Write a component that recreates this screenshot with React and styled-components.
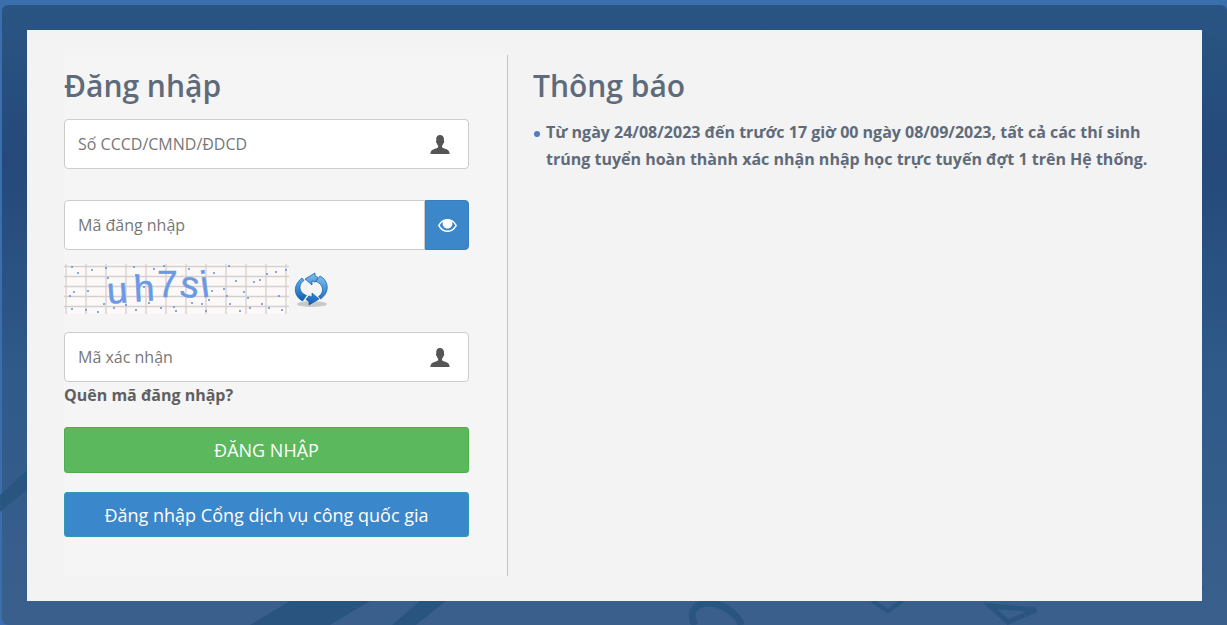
import React from "react"
import styled, { createGlobalStyle } from "styled-components"

const GlobalStyle = createGlobalStyle`
  html, body {
    margin: 0;
    padding: 0;
    background: #3a6fae;
  }
  * {
    box-sizing: border-box;
  }
`

const App = () => (
  <Page>
    <GlobalStyle />
    <Backdrop>
      <BackdropArt />
      <Card>
        <LoginColumn>
          <Title>Đăng nhập</Title>
          <FieldRow>
            <TextInput placeholder="Số CCCD/CMND/ĐDCD" />
            <FieldIcon>
              <UserIcon />
            </FieldIcon>
          </FieldRow>
          <PasswordRow>
            <PasswordInput placeholder="Mã đăng nhập" />
            <EyeButton type="button">
              <EyeIcon />
            </EyeButton>
          </PasswordRow>
          <CaptchaRow>
            <Captcha />
            <RefreshIcon />
          </CaptchaRow>
          <FieldRow>
            <TextInput placeholder="Mã xác nhận" />
            <FieldIcon>
              <UserIcon />
            </FieldIcon>
          </FieldRow>
          <ForgotLink href="#">Quên mã đăng nhập?</ForgotLink>
          <LoginButton type="button">ĐĂNG NHẬP</LoginButton>
          <PortalButton type="button">Đăng nhập Cổng dịch vụ công quốc gia</PortalButton>
        </LoginColumn>
        <NoticeColumn>
          <NoticeTitle>Thông báo</NoticeTitle>
          <NoticeList>
            <NoticeItem>
              Từ ngày 24/08/2023 đến trước 17 giờ 00 ngày 08/09/2023, tất cả các thí sinh trúng tuyển hoàn thành xác nhận nhập học trực tuyến đợt 1 trên Hệ thống.
            </NoticeItem>
          </NoticeList>
        </NoticeColumn>
      </Card>
    </Backdrop>
  </Page>
)

const BackdropArt = () => (
  <ArtSvg viewBox="0 0 1227 625" preserveAspectRatio="none">
    <g fill="#28537f" opacity="0.85">
      <path d="M250 625 L290 601 L370 601 L330 625 Z" />
      <path d="M392 625 L420 601 L446 601 L416 625 Z" />
      <path d="M0 495 L27 470 L27 490 L0 512 Z" />
    </g>
    <g fill="none" stroke="#28537f" strokeWidth="7" opacity="0.8">
      <path d="M695 625 C685 606 705 598 722 606 C734 612 740 620 741 625" />
      <path d="M872 601 L888 611 L902 601" strokeWidth="4" />
      <path d="M990 606 L1008 622 L1036 610 Z" strokeWidth="5" />
      <path d="M1202 590 L1192 578 L1202 568" strokeWidth="5" />
      <path d="M1202 40 L1227 52" strokeWidth="14" opacity="0.35" />
    </g>
  </ArtSvg>
)

const UserIcon = () => (
  <svg width="20" height="19" viewBox="0 0 20 19">
    <path
      fill="#555"
      d="M10 0C7.4 0 6.2 1.8 6.2 3.9c0 .7.1 1.4.1 1.9-.3.2-.4.6-.3 1.1.1.6.4 1 .7 1.1.2 1.1.8 2 1.4 2.6v1.7c-1 .9-3.4 1.5-5 2.2C1.4 15.3.6 16.100.4 19h19.200c-.2-2.900-1-3.700-2.500-4.500-1.600-.7-4-1.300-5-2.200v-1.700c.6-.6 1.200-1.500 1.400-2.600.3-.1.600-.5.700-1.100.100-.5 0-.9-.3-1.100 0-.5.100-1.200.100-1.900C13.800 1.800 12.600 0 10 0Z"
    />
  </svg>
)

const EyeIcon = () => (
  <svg width="19" height="13" viewBox="0 0 19 13">
    <path
      fill="#fff"
      fillRule="evenodd"
      d="M9.500 0C5.200 0 1.900 2.700 0 6.500 1.900 10.300 5.200 13 9.500 13s7.600-2.700 9.500-6.500C17.100 2.700 13.800 0 9.500 0ZM5.200 2.400C4.800 3.100 4.600 3.800 4.600 4.600c0 2.700 2.200 5 4.900 5s4.900-2.300 4.900-5c0-.8-.2-1.500-.6-2.200 1.500.8 2.700 2.300 3.500 4.100-1.700 3-4.400 5-7.800 5s-6.100-2-7.800-5c.8-1.800 2-3.300 3.500-4.100Z"
    />
    <path fill="#fff" d="M9.500 2.200c-1.500 0-2.700 1.100-2.900 2.500.4-.8 1.300-1.300 2.200-1.300.5 0 1-.1 1.200-.5.100-.2.100-.5-.5-.7Z" opacity="0.6" />
  </svg>
)

// noise dots on the captcha, fixed so every render looks the same
const captchaDots = [
  [8, 3], [14, 9], [28, 6], [42, 4], [44, 14], [70, 3], [72, 11], [80, 23], [10, 28], [24, 27], [8, 45],
  [22, 46], [40, 40], [50, 44], [62, 41], [72, 46], [85, 39], [97, 44], [110, 43], [112, 47], [118, 30],
  [128, 39], [138, 40], [142, 47], [148, 27], [150, 9], [160, 25], [163, 32], [165, 2], [172, 17], [180, 28],
  [184, 34], [186, 44], [190, 18], [196, 16], [198, 40], [203, 10], [205, 44], [212, 8], [215, 32], [218, 46],
  [222, 6], [145, 36], [166, 40], [176, 47], [34, 48], [6, 32], [90, 5], [125, 5], [100, 2],
]

const Captcha = () => {
  const lines = []
  for (let x = 0; x < 225; x += 20) lines.push(<line key={"v" + x} x1={x + 2} y1="0" x2={x + 2} y2="50" />)
  for (let y = 0; y < 50; y += 10) lines.push(<line key={"h" + y} x1="0" y1={y + 2.500} x2="225" y2={y + 2.500} />)
  return (
    <svg width="225" height="50" viewBox="0 0 225 50">
      <rect width="225" height="50" fill="#fdf9f8" />
      <g stroke="#d5d0ce" strokeWidth="1.300">{lines}</g>
      <g fill="#5b8fe0">
        {captchaDots.map(([x, y]) => (
          <circle key={x + "-" + y} cx={x} cy={y} r="1" />
        ))}
      </g>
      <g fill="#6a9ae6" fontFamily="'Liberation Sans', sans-serif" fontSize="37" stroke="#6a9ae6" strokeWidth="0.500">
        <text x="43" y="39" transform="rotate(-4 55 30)">u</text>
        <text x="70" y="37" transform="rotate(-3 80 30)">h</text>
        <text x="93" y="33">7</text>
        <text x="116" y="33" transform="rotate(8 125 25)">s</text>
        <text x="137" y="33" transform="rotate(-8 142 25)">i</text>
      </g>
    </svg>
  )
}

const RefreshIcon = () => (
  <svg width="36" height="36" viewBox="0 0 36 36">
    <defs>
      <linearGradient id="refreshBlue" x1="0" y1="0" x2="0" y2="1">
        <stop offset="0" stopColor="#7cc0ee" />
        <stop offset="1" stopColor="#0d5fb5" />
      </linearGradient>
    </defs>
    <ellipse cx="18" cy="32" rx="15" ry="3" fill="#000" opacity="0.18" />
    <path
      fill="url(#refreshBlue)"
      stroke="#0c5aa8"
      strokeWidth="0.700"
      d="M21 1 11 7l7 6v-4c1 .2 2 .5 3 1.200L24 5.500C23 4.500 22 4 21 3.800ZM8 6C3 10 .500 15 1.500 20c.7 3.500 3 7 7 9l4-5.500C8.500 22 6 19 6 15.500 6 12.500 7.500 10 10 8.500Z"
    />
    <path
      fill="url(#refreshBlue)"
      stroke="#0c5aa8"
      strokeWidth="0.700"
      d="M26 4 22 9.500c4 1.500 6.500 4.500 6.500 8 0 3-1.500 5.500-4 7l2 2.500c5-3.500 7.500-8.500 6.500-14-.7-3.500-3-7-7-9ZM15 33l10-6-7-6v4c-1-.2-2-.5-3-1.200L12 27.500c1 1 2 1.500 3 1.700Z"
    />
  </svg>
)

const Page = styled.div`
  width: 100%;
  height: 625px;
  padding: 5px 0 0 2px;
  overflow: hidden;
  background: #3a6fae;
`

const Backdrop = styled.div`
  position: relative;
  height: 620px;
  padding: 25px 25px 24px 25px;
  border-radius: 6px 6px 0 6px;
  background: linear-gradient(180deg, #2a5583 0%, #24497a 25%, #2f5a8a 60%, #3a5f8c 100%);
`

const ArtSvg = styled.svg`
  position: absolute;
  top: -5px;
  left: -2px;
  width: 1227px;
  height: 625px;
`

const Card = styled.div`
  position: relative;
  display: flex;
  height: 571px;
  padding: 25px 37px;
  background: #f3f3f3;
`

const LoginColumn = styled.div`
  display: flex;
  flex-direction: column;
  flex: 0 0 444px;
  padding-right: 38px;
  background: #f5f5f5;
  border-right: 1px solid #c4c4c4;
`

const Title = styled.h2`
  margin: 10px 0 13px;
  font-family: "Open Sans", sans-serif;
  font-size: 30px;
  line-height: 41px;
  font-weight: 600;
  color: #5f6b7a;
`

const FieldRow = styled.div`
  position: relative;
  height: 50px;
`

const inputBase = `
  height: 50px;
  padding: 0 13px;
  background: #fff;
  border: 1px solid #ccc;
  font-family: "Open Sans", sans-serif;
  font-size: 16px;
  color: #555;
  outline: none;
  &::placeholder {
    color: #777;
    opacity: 1;
  }
`

const TextInput = styled.input`
  ${inputBase}
  width: 100%;
  border-radius: 4px;
`

const FieldIcon = styled.span`
  position: absolute;
  top: 16px;
  right: 19px;
  line-height: 0;
`

const PasswordRow = styled.div`
  display: flex;
  height: 50px;
  margin-top: 31px;
`

const PasswordInput = styled.input`
  ${inputBase}
  flex: 1;
  min-width: 0;
  border-radius: 4px 0 0 4px;
`

const EyeButton = styled.button`
  display: flex;
  align-items: center;
  justify-content: center;
  flex: 0 0 44px;
  padding: 0;
  background: #3c87c9;
  border: 1px solid #3a7fbd;
  border-radius: 0 4px 4px 0;
`

const CaptchaRow = styled.div`
  display: flex;
  align-items: center;
  gap: 5px;
  height: 51px;
  margin: 13px 0 18px;
  & > svg:last-child {
    margin-top: 3px;
  }
`

const ForgotLink = styled.a`
  margin-top: 2px;
  font-family: "Open Sans", sans-serif;
  font-size: 16px;
  line-height: 22px;
  font-weight: 700;
  color: #5f5f5f;
  text-decoration: none;
`

const WideButton = styled.button`
  width: 100%;
  padding: 0;
  border-radius: 3px;
  font-family: "Open Sans", sans-serif;
  font-size: 18px;
  color: #fff;
`

const LoginButton = styled(WideButton)`
  height: 46px;
  margin-top: 21px;
  background: #5cb85c;
  border: 1px solid #4cae4c;
`

const PortalButton = styled(WideButton)`
  height: 45px;
  margin-top: 19px;
  background: #3a87cb;
  border: 1px solid #2f9ab5;
`

const NoticeColumn = styled.div`
  flex: 1;
  padding-left: 25px;
`

const NoticeTitle = styled.h2`
  margin: 10px 0 13px;
  font-family: "Open Sans", sans-serif;
  font-size: 30px;
  line-height: 41px;
  font-weight: 600;
  color: #5f6b7a;
`

const NoticeList = styled.ul`
  list-style: none;
  margin: 0;
  padding: 0 0 0 13px;
`

const NoticeItem = styled.li`
  position: relative;
  font-family: "Open Sans", sans-serif;
  font-size: 16px;
  line-height: 27px;
  font-weight: 700;
  color: #5f6b7a;
  &::before {
    content: "";
    position: absolute;
    left: -12px;
    top: 12px;
    width: 6px;
    height: 6px;
    border-radius: 50%;
    background: #4a7fc4;
  }
`

export default App
